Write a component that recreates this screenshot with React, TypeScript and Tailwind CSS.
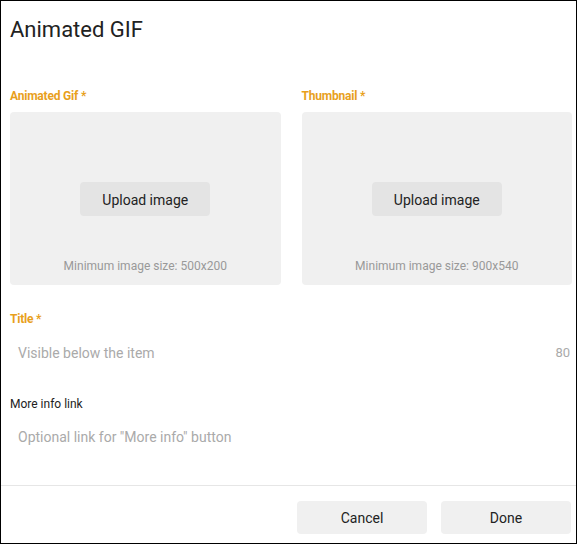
import React from "react";

function Upload({ label, caption }: { label: string; caption: string }) {
  return (
    <div className="flex flex-col">
      <div className="text-[12px] font-bold text-[#e8a01c] h-[16px] leading-[16px] tracking-[-0.2px]">{label} *</div>
      <div className="mt-[8px] h-[173px] rounded-[4px] bg-[#f0f0f0] flex flex-col items-center relative">
        <button className="mt-[70px] w-[130px] h-[34px] pt-[2px] rounded-[4px] bg-[#e4e4e4] text-[14px] text-[#222]">Upload image</button>
        <div className="absolute bottom-[10px] left-0 right-0 text-center text-[12px] text-[#999]">{caption}</div>
      </div>
    </div>
  );
}

export default function App() {
  return (
    <div className="w-[577px] h-[544px] border border-black bg-white flex flex-col" style={{ fontFamily: "Roboto, 'Liberation Sans', sans-serif" }}>
      <div className="px-[9px] pt-[14px] text-[22px] leading-[30px] text-[#222]">Animated GIF</div>
      <div className="mt-[43px] pl-[9px] pr-[4px] grid grid-cols-2 gap-[21px]">
        <Upload label="Animated Gif" caption="Minimum image size: 500x200" />
        <Upload label="Thumbnail" caption="Minimum image size: 900x540" />
      </div>
      <div className="px-[9px] mt-[26px] text-[12px] font-bold text-[#e8a01c] leading-[16px] tracking-[-0.2px]">Title *</div>
      <div className="pl-[17px] pr-[6px] mt-[18px] flex justify-between text-[14px] text-[#aaa] leading-[16px]">
        <span>Visible below the item</span>
        <span className="text-[13px]">80</span>
      </div>
      <div className="px-[9px] mt-[35px] text-[12px] text-[#222] leading-[16px]">More info link</div>
      <div className="pl-[17px] mt-[17px] text-[14px] text-[#aaa] leading-[16px]">Optional link for "More info" button</div>
      <div className="mt-[40px] border-t border-[#e6e6e6]"></div>
      <div className="flex justify-end gap-[14px] pr-[5px] mt-[15px]">
        <button className="w-[130px] h-[33px] pt-[2px] rounded-[4px] bg-[#f0f0f0] text-[14px] text-[#222]">Cancel</button>
        <button className="w-[130px] h-[33px] pt-[2px] rounded-[4px] bg-[#f0f0f0] text-[14px] text-[#222]">Done</button>
      </div>
    </div>
  );
}
